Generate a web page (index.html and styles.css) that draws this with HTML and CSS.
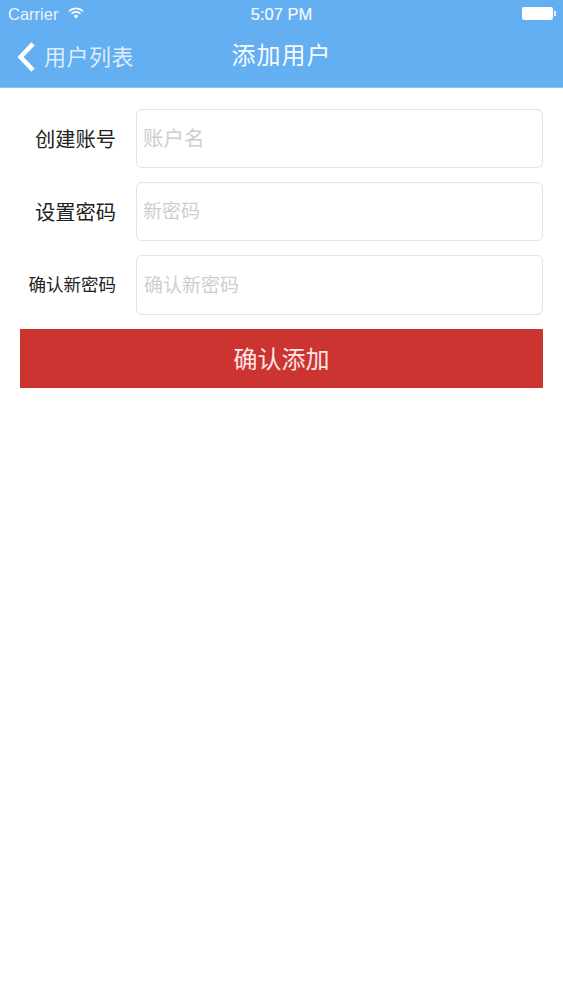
FILE: index.html
```html
<!DOCTYPE html>
<html lang="zh">
<head>
<meta charset="utf-8">
<title>添加用户</title>
<link rel="stylesheet" href="styles.css">
</head>
<body>
<header class="top">
  <div class="status">
    <div class="status-left">
      <span>Carrier</span>
      <svg class="wifi" viewBox="0 0 16 12" width="16" height="12"><path d="M1 4.2a10 10 0 0 1 14 0" fill="none" stroke="#fff" stroke-width="1.6"/><path d="M3.5 6.7a6.4 6.4 0 0 1 9 0" fill="none" stroke="#fff" stroke-width="1.6"/><path d="M8 11.5 5.6 9a3.4 3.4 0 0 1 4.8 0z" fill="#fff"/></svg>
    </div>
    <div class="status-time">5:07 PM</div>
    <div class="status-right">
      <span class="battery"></span><span class="battery-tip"></span>
    </div>
  </div>
  <nav class="nav">
    <div class="back">
      <svg class="chevron" viewBox="0 0 19 30" width="19" height="30"><path d="M15.5 3.5 4.5 15l11 11.500" fill="none" stroke="#fff" stroke-width="4.500" stroke-linecap="square"/></svg>
      <span class="back-text">用户列表</span>
    </div>
    <h1 class="title">添加用户</h1>
  </nav>
</header>
<form class="form">
  <div class="row">
    <label class="label">创建账号</label>
    <input class="field field-lg" type="text" placeholder="账户名">
  </div>
  <div class="row">
    <label class="label">设置密码</label>
    <input class="field" type="text" placeholder="新密码">
  </div>
  <div class="row row-tall">
    <label class="label label-sm">确认新密码</label>
    <input class="field field-wide" type="text" placeholder="确认新密码">
  </div>
  <button class="submit" type="button">确认添加</button>
</form>
</body>
</html>
```
FILE: styles.css
```css
* { box-sizing: border-box; }
html, body { margin: 0; padding: 0; }
body {
  width: 563px;
  height: 1000px;
  background: #fff;
  overflow: hidden;
  font-family: "Liberation Sans", "Noto Sans CJK SC", sans-serif;
}
.top {
  height: 88px;
  background: #64aef2;
  color: #fff;
  border-bottom: 1px solid #8fc0ef;
}
.status {
  height: 28px;
  position: relative;
  display: flex;
  justify-content: space-between;
  align-items: center;
  padding: 0 7px 0 8px;
  font-size: 16.500px;
}
.status-left { display: flex; align-items: center; gap: 10px; color: #eaf4fd; }
.wifi { margin-top: -3px; }
.status-time {
  position: absolute;
  left: 0;
  right: 0;
  text-align: center;
  color: #f4f9fe;
  -webkit-text-stroke: 0.2px #f4f9fe;
}
.status-right { display: flex; align-items: center; gap: 1px; margin-top: -1px; }
.battery {
  width: 31px;
  height: 13px;
  background: #fff;
  border-radius: 2px;
  display: block;
}
.battery-tip { width: 2px; height: 5px; background: #eaf4fd; display: block; }
.nav {
  height: 59px;
  position: relative;
  display: flex;
  align-items: center;
  padding: 0 0 2px 16px;
}
.back { display: flex; align-items: center; gap: 9px; font-size: 22px; color: #dcedfc; }
.back-text { letter-spacing: 0.5px; padding-bottom: 4px; }
.chevron { display: block; }
.title {
  position: absolute;
  left: 0;
  right: 0;
  margin: 0;
  padding-bottom: 6px;
  text-align: center;
  font-size: 24px;
  font-weight: 400;
  letter-spacing: 1px;
  color: #f6fafe;
}
.form {
  padding: 21px 20px 0;
  display: flex;
  flex-direction: column;
  gap: 14px;
}
.row { display: flex; align-items: center; height: 59px; }
.row-tall { height: 60px; }
.label {
  width: 96px;
  padding-bottom: 1px;
  text-align: right;
  font-size: 20.250px;
  color: #222;
  flex: none;
}
.label-sm { font-size: 17.500px; padding-bottom: 3px; }
.field {
  margin-left: 20px;
  flex: 1;
  min-width: 0;
  height: 100%;
  border: 1.500px solid #e2e3e5;
  border-radius: 6px;
  background: #fff;
  padding: 0 6px;
  font-family: inherit;
  font-size: 19px;
  outline: none;
}
.field-lg { font-size: 20.500px; }
.field-wide { padding: 2px 7px 0; }
.field::placeholder { color: #ccced2; opacity: 1; }
.submit {
  height: 59px;
  border: 0;
  background: #cc3432;
  color: #fbe6e4;
  font-family: inherit;
  font-size: 24px;
  padding: 0 0 3px;
}
```
